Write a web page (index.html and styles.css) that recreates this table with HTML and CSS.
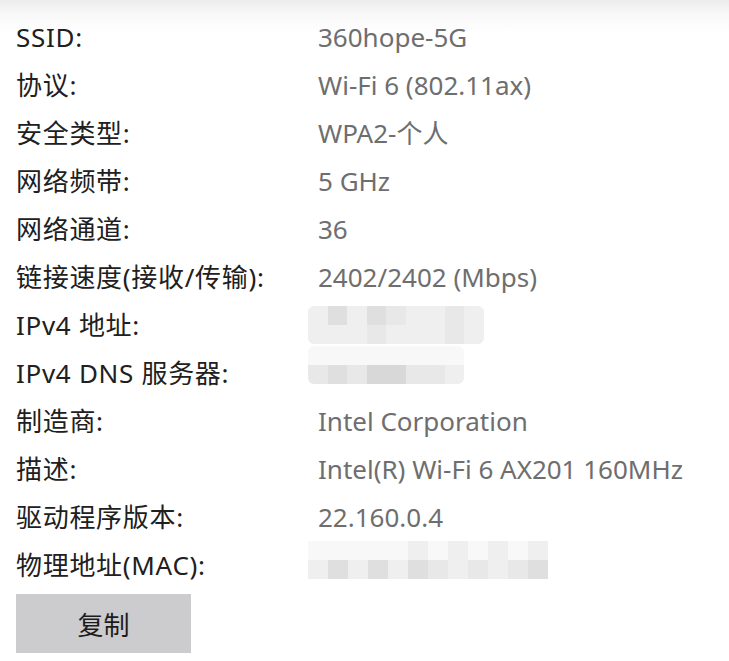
FILE: index.html
```html
<!DOCTYPE html>
<html lang="zh-CN">
<head>
<meta charset="utf-8">
<link rel="stylesheet" href="styles.css">
</head>
<body>
<div class="panel">
  <dl class="props">
    <div class="row"><dt>SSID:</dt><dd>360hope-5G</dd></div>
    <div class="row"><dt>协议:</dt><dd>Wi-Fi 6 (802.11ax)</dd></div>
    <div class="row"><dt>安全类型:</dt><dd>WPA2-个人</dd></div>
    <div class="row"><dt>网络频带:</dt><dd>5 GHz</dd></div>
    <div class="row"><dt>网络通道:</dt><dd>36</dd></div>
    <div class="row"><dt>链接速度(接收/传输):</dt><dd>2402/2402 (Mbps)</dd></div>
    <div class="row"><dt>IPv4 地址:</dt><dd><div class="blur blur-ip">
      <i class="a"></i><i class="c"></i><i class="a"></i><i class="c"></i><i class="b"></i><i class="a"></i><i class="a"></i><i class="b"></i><i class="a"></i>
      <i class="a"></i><i class="a"></i><i class="a"></i><i class="b"></i><i class="a"></i><i class="a"></i><i class="a"></i><i class="b"></i><i class="a"></i>
    </div></dd></div>
    <div class="row"><dt>IPv4 DNS 服务器:</dt><dd><div class="blur blur-dns">
      <i class="w"></i><i class="w"></i><i class="w"></i><i class="w"></i><i class="w"></i><i class="w"></i><i class="w"></i><i class="w"></i>
      <i class="b"></i><i class="c"></i><i class="b"></i><i class="d"></i><i class="d"></i><i class="b"></i><i class="b"></i><i class="a"></i>
    </div></dd></div>
    <div class="row"><dt>制造商:</dt><dd>Intel Corporation</dd></div>
    <div class="row"><dt>描述:</dt><dd>Intel(R) Wi-Fi 6 AX201 160MHz</dd></div>
    <div class="row"><dt>驱动程序版本:</dt><dd>22.160.0.4</dd></div>
    <div class="row"><dt>物理地址(MAC):</dt><dd><div class="blur blur-mac">
      <i class="w"></i><i class="w"></i><i class="w"></i><i class="w"></i><i class="w"></i><i class="a"></i><i class="w"></i><i class="a"></i><i class="w"></i><i class="a"></i><i class="w"></i><i class="a"></i>
      <i class="a"></i><i class="c"></i><i class="a"></i><i class="c"></i><i class="a"></i><i class="c"></i><i class="b"></i><i class="a"></i><i class="b"></i><i class="a"></i><i class="b"></i><i class="c"></i>
    </div></dd></div>
  </dl>
  <button class="copy">复制</button>
</div>
</body>
</html>
```
FILE: styles.css
```css
html, body {
  margin: 0;
  padding: 0;
  background: #ffffff;
}
body {
  width: 729px;
  height: 661px;
  overflow: hidden;
  background: linear-gradient(to bottom, #ececec 0px, #f8f8f8 14px, #ffffff 34px);
  font-family: "Noto Sans", "Noto Sans CJK SC", sans-serif;
}
.panel {
  padding: 13px 0 0 16px;
}
.props {
  margin: 0;
}
.row {
  display: grid;
  grid-template-columns: 302px 1fr;
  height: 48px;
  align-items: center;
}
dt, dd {
  margin: 0;
  font-size: 26px;
  line-height: 34px;
  white-space: nowrap;
}
dt {
  color: #202020;
  letter-spacing: 0.7px;
}
dd {
  color: #6e6e6e;
  display: flex;
  align-items: center;
}
.blur {
  display: grid;
  grid-auto-rows: 19px;
  margin-left: -10px;
  border-radius: 6px;
  overflow: hidden;
}
.blur-ip {
  grid-template-columns: repeat(9, 19.5px);
}
.blur-dns {
  grid-template-columns: repeat(8, 19.5px);
  transform: translateY(-8px);
}
.blur-mac {
  grid-template-columns: repeat(12, 20px);
  transform: translateY(-5px);
  border-radius: 0;
}
.blur i { display: block; }
.blur .w { background: #f8f8f9; }
.blur .a { background: #efeff0; }
.blur .b { background: #e8e8e9; }
.blur .c { background: #dfdfe0; }
.blur .d { background: #d8d8d9; }
.copy {
  margin-top: 5px;
  width: 175px;
  height: 59px;
  border: none;
  background: #cccbcd;
  color: #1c1c1c;
  font-family: "Noto Sans CJK SC", sans-serif;
  font-size: 26px;
  padding: 0;
}
```
